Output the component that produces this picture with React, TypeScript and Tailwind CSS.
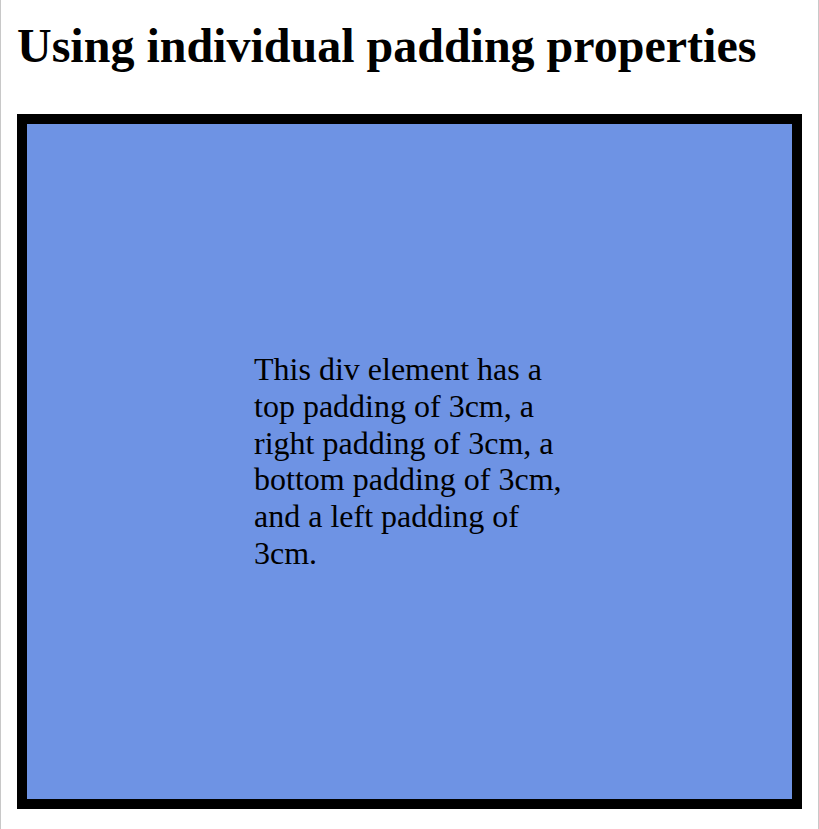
// Padding demo: heading plus a bordered box with 3cm padding on each side (rendered at 2x)
const App = () => {
  return (
    <div className="min-h-screen border-x border-[#c8c8c8] bg-white px-4 pt-[18px] font-['Liberation_Serif',serif] text-black">
      <h2 className="text-[48px] font-bold leading-[55px]">
        Using individual padding properties
      </h2>

      {/* Box with a thick black border and equal padding all round */}
      <div className="mt-[41px] border-[10px] border-black bg-[#6e93e4] p-[227px] text-[32px] leading-[36.8px]">
        This div element has a top padding of 3cm, a right padding of 3cm, a
        bottom padding of 3cm, and a left padding of 3cm.
      </div>
    </div>
  )
}

export default App
